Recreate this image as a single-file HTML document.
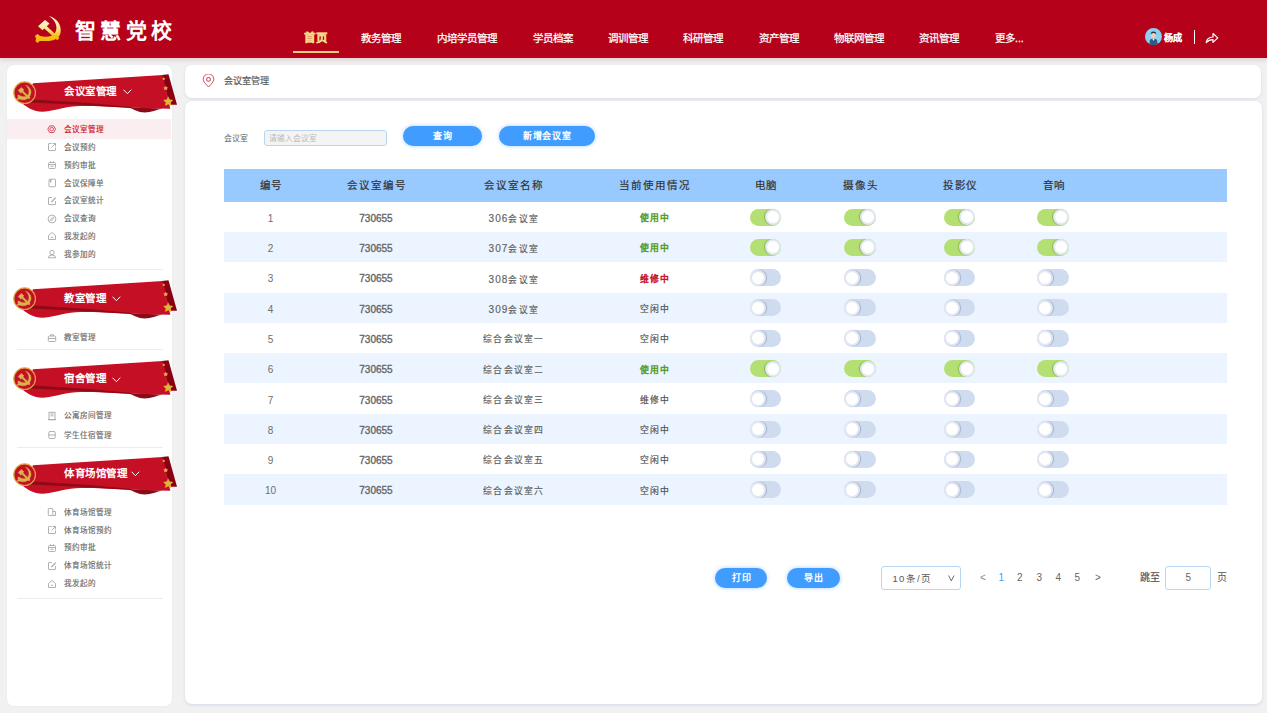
<!DOCTYPE html><html lang="zh-CN"><head><meta charset="utf-8"><style>
*{box-sizing:border-box;margin:0;padding:0}
html,body{width:1267px;height:713px;overflow:hidden;background:#f1f1f1;font-family:"Liberation Sans",sans-serif;color:#555}
.abs{position:absolute}
#hdr{position:absolute;left:0;top:0;width:1267px;height:58px;background:#b6011b;box-shadow:0 2px 5px rgba(150,20,40,.16)}
.nav{position:absolute;top:31.8px;font-size:10.5px;line-height:12px;color:#fff;white-space:nowrap;-webkit-text-stroke:.25px #fff}
#side{position:absolute;left:7px;top:65px;width:164.5px;height:641px;background:#fff;border-radius:7px;box-shadow:0 0 2px rgba(200,205,215,.35)}
#crumb{position:absolute;left:185px;top:65px;width:1076px;height:32.5px;background:#fff;border-radius:7px;box-shadow:0 1px 3px rgba(170,185,210,.35)}
#main{position:absolute;left:185px;top:101px;width:1076.5px;height:603px;background:#fff;border-radius:7px;box-shadow:0 1px 3px rgba(170,185,210,.45)}
.mi{position:absolute;left:64px;font-size:7.6px;line-height:10px;color:#6a6a6a;white-space:nowrap;-webkit-text-stroke:.15px #6a6a6a}
.ic{position:absolute;left:46.8px;width:10px;height:10px}
.dv{position:absolute;left:16.5px;width:146.5px;height:1px;background:#eaecf0}
.bt{position:absolute;font-size:10.5px;letter-spacing:.55px;line-height:12px;font-weight:bold;color:#fff;white-space:nowrap}
.th{position:absolute;top:180px;margin-left:1px;font-size:10.5px;line-height:11px;color:#333;-webkit-text-stroke:.2px #333;letter-spacing:1.95px;white-space:nowrap;transform:translateX(-50%)}
.row{position:absolute;left:224px;width:1003px}
.td{position:absolute;font-size:10px;line-height:11px;color:#555;white-space:nowrap;transform:translateX(-50%)}
.tg{position:absolute;width:31.5px;height:17px;border-radius:9px}
.tg.on{background:#b3df73}
.tg.off{background:#cfdbef}
.tg i{position:absolute;top:.5px;width:16px;height:16px;border-radius:50%;background:#fff;border:2.2px solid #e3e7f2}
.tg.on i{right:0;box-shadow:-1px 0 1px rgba(60,110,20,.35)}
.tg.off i{left:0;box-shadow:1px 0 1px rgba(80,100,140,.35)}
.btn{position:absolute;height:20px;border-radius:10px;background:#409cff;color:#fff;font-size:9px;font-weight:bold;line-height:21px;text-align:center;box-shadow:0 0 4px rgba(64,156,255,.45);white-space:nowrap}
.pg{position:absolute;top:572px;font-size:10px;line-height:12px;color:#666;white-space:nowrap}
</style></head><body>
<div id="hdr">
<svg class="abs" style="left:30px;top:12px" width="36" height="34" viewBox="0 0 36 34">
<defs><linearGradient id="gd" x1="0" y1="0" x2="0" y2="1"><stop offset="0" stop-color="#fffbe6"/><stop offset=".45" stop-color="#fbe48a"/><stop offset=".75" stop-color="#f8c21a"/><stop offset="1" stop-color="#f5b000"/></linearGradient></defs>
<path d="M19,4 C27,6 32,13 30.5,21 C29,27 23,29.5 15,29 L9.5,29 L8,31 L5.5,29.5 L6,26.5 L5,24 L7.5,22 L10,24 C16,25.5 22,25 25,21 C28,16 26.5,9 19,4Z" fill="url(#gd)"/>
<path d="M8,14.3 L15,8 L19.5,11.5 L16.8,14.2 L29.5,26 L27.2,28.3 L14.3,16.5 L12.5,18.2 Z" fill="url(#gd)"/>
</svg>
<div class="abs" style="left:75px;top:19px;font-size:21px;line-height:24px;font-weight:bold;color:#fff;letter-spacing:4.3px;white-space:nowrap">智慧党校</div>
<div class="nav" style="left:304px;font-size:11.5px;letter-spacing:.5px;font-weight:bold;color:#f7d98a;top:32.3px;-webkit-text-stroke:.3px #f7d98a">首页</div>
<div class="abs" style="left:293px;top:51px;width:46px;height:2px;background:#f3cf7c"></div>
<div class="nav" style="left:361px">教务管理</div>
<div class="nav" style="left:437px">内培学员管理</div>
<div class="nav" style="left:533px">学员档案</div>
<div class="nav" style="left:608px">调训管理</div>
<div class="nav" style="left:683px">科研管理</div>
<div class="nav" style="left:759px">资产管理</div>
<div class="nav" style="left:834px">物联网管理</div>
<div class="nav" style="left:919px">资讯管理</div>
<div class="nav" style="left:995px">更多...</div>
<svg class="abs" style="left:1145px;top:27.7px" width="17" height="17" viewBox="0 0 17 17">
<circle cx="8.5" cy="8.5" r="8.5" fill="#8ccfee"/>
<path d="M4.5 16 L4.8 12.5 Q5.2 11.2 6.8 10.8 L10.2 10.8 Q11.8 11.2 12.2 12.5 L12.5 16 A8.5 8.5 0 0 1 4.5 16Z" fill="#2e5a86"/>
<path d="M7.3 10.8 L8.5 13 L9.7 10.8Z" fill="#f2f2f2"/>
<ellipse cx="8.5" cy="7.6" rx="2.4" ry="3" fill="#f3cdb0"/>
<path d="M5.8 6.6 Q5.6 3.6 8.5 3.5 Q11.4 3.6 11.2 6.6 Q10.6 5 8.5 5.1 Q6.4 5 5.8 6.6Z" fill="#2b3240"/>
</svg>
<div class="abs" style="left:1163.5px;top:32.5px;font-size:9.2px;line-height:11px;font-weight:bold;color:#fff;-webkit-text-stroke:.1px #fff">杨成</div>
<div class="abs" style="left:1194px;top:30px;width:1px;height:14px;background:#fff"></div>
<svg class="abs" style="left:1204px;top:32px" width="15" height="12" viewBox="0 0 15 12">
<path d="M2.2 10.6 C2.6 7.2 5 5.2 9 5 L9 1.5 L13.8 5.9 L9 10.4 L9 7.7 C6 7.7 4 8.6 2.2 10.6Z" fill="none" stroke="#fff" stroke-width="1.2" stroke-linejoin="round"/>
</svg>
</div>
<div id="side"></div><div id="crumb"></div><div id="main"></div>
<svg class="abs" style="left:5px;top:68px" width="180" height="48" viewBox="0 0 180 48">
<path d="M156.8,7.1 L163.5,6.3 L172,36.8 L164.5,36.8 Z" fill="#8a0012"/>
<path d="M157.5,40.4 C152,41.5 146,44.3 139.7,44.4 C133,44.4 128,41 124,39.2 Z" fill="#8a0a16"/>
<path d="M28,15.3 L157.8,7 L165.3,40.7 C150,40.6 135,39.8 120,39.4 C100,39 85,37.6 71,38.3 C56,39.5 46,43.8 36.9,43.7 C29,43.5 23,40 18,36 Z" fill="#c50f25"/>
<path d="M24,31.6 C40,32.4 55,33.3 68,34 C85,35 105,36.6 127,39.2 L127,40.2 C105,38.4 85,37.4 68,36.6 C55,36 40,35.3 24,34.6 Z" fill="#8e0a17"/>
<path d="M158.7,9.3 l.5,1 1.1,.15 -.8,.75 .2,1.1 -1,-.5 -1,.5 .2,-1.1 -.8,-.75 1.1,-.15z" fill="#e2b33c"/>
<path d="M160.7,17.6 l.8,1.6 1.7,.25 -1.25,1.2 .3,1.7 -1.55,-.8 -1.55,.8 .3,-1.7 -1.25,-1.2 1.7,-.25z" fill="#e2b33c"/>
<path d="M163.2,28.4 l1.55,3.15 3.45,.5 -2.5,2.45 .6,3.45 -3.1,-1.63 -3.1,1.63 .6,-3.45 -2.5,-2.45 3.45,-.5z" fill="#e2b33c"/>
<circle cx="19.65" cy="24.7" r="10.8" fill="#c50f25" stroke="#d9a84a" stroke-width="1.2"/>
<g transform="translate(12.4,17)" fill="#dcb24e" stroke="#dcb24e" stroke-width=".4" stroke-linejoin="round">
<path d="M8.2,0 C11.8,1.5 13.8,4.5 13.6,7.5 C13.4,10.5 11.5,13.5 8,14.6 C5.5,15.2 3,14.6 1.6,14 L0.2,14.8 L-0.2,13.3 L0.8,12.5 L0.4,10 L2,10.2 L3.2,11 C5.5,12 8.5,12 10.2,10.5 C11.8,8.8 11.9,5.5 10.8,3.5 C10.2,2.2 9.3,1 8.2,0Z"/>
<path d="M0.8,5.6 L3.8,2.4 L6.6,4.8 L5.6,5.9 L12.8,12.8 L11.6,14 L4.4,7.2 L3.4,8.3 Z"/>
</g>
</svg>
<div class="bt" style="left:64px;top:85px">会议室管理</div>
<svg class="abs" style="left:122.8px;top:88.5px" width="9" height="6" viewBox="0 0 9 6"><path d="M.5 .7 L4.4 4.7 L8.3 .7" fill="none" stroke="#fff" stroke-width="1"/></svg>
<div class="abs" style="left:7px;top:119.0px;width:164px;height:19.5px;background:#fbeef0"></div>
<svg class="ic" style="top:124.5px" viewBox="0 0 10 10"><path d="M0.8,4.2 L2.75,0.9 L6.65,0.9 L8.6,4.2 L6.65,7.5 L2.75,7.5Z" fill="none" stroke="#d63a52" stroke-width=".9" stroke-linejoin="round"/><circle cx="4.7" cy="4.2" r="1.8" fill="none" stroke="#d63a52" stroke-width=".85"/></svg>
<div class="mi" style="top:125.10px;color:#c8102e;-webkit-text-stroke:.15px #c8102e;">会议室管理</div>
<svg class="ic" style="top:142.3px" viewBox="0 0 10 10"><path d="M4.5 1.5 H2 Q1.5 1.5 1.5 2 V8 Q1.5 8.5 2 8.5 H8 Q8.5 8.5 8.5 8 V5.5 M5.5 1.5 H8.5 V4.5 M8.5 1.5 L4.5 5.5" fill="none" stroke="#a8a8a8" stroke-width=".9"/></svg>
<div class="mi" style="top:142.90px;">会议预约</div>
<svg class="ic" style="top:160.1px" viewBox="0 0 10 10"><rect x="1.5" y="2.5" width="7" height="6" rx="1" fill="none" stroke="#a8a8a8" stroke-width=".9"/><path d="M1.5 4.5 H8.5 M3.5 1.2 V3 M6.5 1.2 V3 M3.5 6.3 H6.5" fill="none" stroke="#a8a8a8" stroke-width=".9"/></svg>
<div class="mi" style="top:160.70px;">预约审批</div>
<svg class="ic" style="top:177.9px" viewBox="0 0 10 10"><rect x="2" y="1.2" width="6.5" height="7.6" rx=".8" fill="none" stroke="#a8a8a8" stroke-width=".9"/><path d="M3.5 1.2 V4.5 M3.5 3 H5" fill="none" stroke="#a8a8a8" stroke-width=".9"/></svg>
<div class="mi" style="top:178.50px;">会议保障单</div>
<svg class="ic" style="top:195.7px" viewBox="0 0 10 10"><path d="M8.5 5 V8 Q8.5 8.6 8 8.6 H2 Q1.5 8.6 1.5 8 V2 Q1.5 1.5 2 1.5 H5 M8.3 1.6 L4.5 5.4 V6 H5.1 L8.9 2.2Z" fill="none" stroke="#a8a8a8" stroke-width=".9"/></svg>
<div class="mi" style="top:196.30px;">会议室统计</div>
<svg class="ic" style="top:213.5px" viewBox="0 0 10 10"><circle cx="5" cy="5" r="3.9" fill="none" stroke="#a8a8a8" stroke-width=".9"/><path d="M6.8 3.2 L5.6 5.6 L3.2 6.8 L4.4 4.4Z" fill="none" stroke="#a8a8a8" stroke-width=".8"/></svg>
<div class="mi" style="top:214.10px;">会议查询</div>
<svg class="ic" style="top:231.3px" viewBox="0 0 10 10"><path d="M1.5 4.5 L5 1.5 L8.5 4.5 V8.5 H1.5Z M3.8 6.3 H6.2" fill="none" stroke="#a8a8a8" stroke-width=".9"/></svg>
<div class="mi" style="top:231.90px;">我发起的</div>
<svg class="ic" style="top:249.10000000000002px" viewBox="0 0 10 10"><circle cx="5" cy="3.5" r="2.2" fill="none" stroke="#a8a8a8" stroke-width=".9"/><path d="M1.3 8.8 Q1.5 6 5 6 Q8.5 6 8.7 8.8Z" fill="none" stroke="#a8a8a8" stroke-width=".9"/></svg>
<div class="mi" style="top:249.70px;">我参加的</div>
<div class="dv" style="top:268.5px"></div>
<svg class="abs" style="left:5px;top:273.9px" width="180" height="48" viewBox="0 0 180 48">
<path d="M156.8,7.1 L163.5,6.3 L172,36.8 L164.5,36.8 Z" fill="#8a0012"/>
<path d="M157.5,40.4 C152,41.5 146,44.3 139.7,44.4 C133,44.4 128,41 124,39.2 Z" fill="#8a0a16"/>
<path d="M28,15.3 L157.8,7 L165.3,40.7 C150,40.6 135,39.8 120,39.4 C100,39 85,37.6 71,38.3 C56,39.5 46,43.8 36.9,43.7 C29,43.5 23,40 18,36 Z" fill="#c50f25"/>
<path d="M24,31.6 C40,32.4 55,33.3 68,34 C85,35 105,36.6 127,39.2 L127,40.2 C105,38.4 85,37.4 68,36.6 C55,36 40,35.3 24,34.6 Z" fill="#8e0a17"/>
<path d="M158.7,9.3 l.5,1 1.1,.15 -.8,.75 .2,1.1 -1,-.5 -1,.5 .2,-1.1 -.8,-.75 1.1,-.15z" fill="#e2b33c"/>
<path d="M160.7,17.6 l.8,1.6 1.7,.25 -1.25,1.2 .3,1.7 -1.55,-.8 -1.55,.8 .3,-1.7 -1.25,-1.2 1.7,-.25z" fill="#e2b33c"/>
<path d="M163.2,28.4 l1.55,3.15 3.45,.5 -2.5,2.45 .6,3.45 -3.1,-1.63 -3.1,1.63 .6,-3.45 -2.5,-2.45 3.45,-.5z" fill="#e2b33c"/>
<circle cx="19.65" cy="24.7" r="10.8" fill="#c50f25" stroke="#d9a84a" stroke-width="1.2"/>
<g transform="translate(12.4,17)" fill="#dcb24e" stroke="#dcb24e" stroke-width=".4" stroke-linejoin="round">
<path d="M8.2,0 C11.8,1.5 13.8,4.5 13.6,7.5 C13.4,10.5 11.5,13.5 8,14.6 C5.5,15.2 3,14.6 1.6,14 L0.2,14.8 L-0.2,13.3 L0.8,12.5 L0.4,10 L2,10.2 L3.2,11 C5.5,12 8.5,12 10.2,10.5 C11.8,8.8 11.9,5.5 10.8,3.5 C10.2,2.2 9.3,1 8.2,0Z"/>
<path d="M0.8,5.6 L3.8,2.4 L6.6,4.8 L5.6,5.9 L12.8,12.8 L11.6,14 L4.4,7.2 L3.4,8.3 Z"/>
</g>
</svg>
<div class="bt" style="left:64px;top:292.4px">教室管理</div>
<svg class="abs" style="left:112.3px;top:295.9px" width="9" height="6" viewBox="0 0 9 6"><path d="M.5 .7 L4.4 4.7 L8.3 .7" fill="none" stroke="#fff" stroke-width="1"/></svg>
<svg class="ic" style="top:332.5px" viewBox="0 0 10 10"><rect x="1.3" y="3" width="7.4" height="5.5" rx="1" fill="none" stroke="#a8a8a8" stroke-width=".9"/><path d="M3.5 3 V1.8 H6.5 V3 M1.3 5.5 H8.7 M5 4.8 V6" fill="none" stroke="#a8a8a8" stroke-width=".9"/></svg>
<div class="mi" style="top:333.10px;">教室管理</div>
<div class="dv" style="top:348.8px"></div>
<svg class="abs" style="left:5px;top:354.2px" width="180" height="48" viewBox="0 0 180 48">
<path d="M156.8,7.1 L163.5,6.3 L172,36.8 L164.5,36.8 Z" fill="#8a0012"/>
<path d="M157.5,40.4 C152,41.5 146,44.3 139.7,44.4 C133,44.4 128,41 124,39.2 Z" fill="#8a0a16"/>
<path d="M28,15.3 L157.8,7 L165.3,40.7 C150,40.6 135,39.8 120,39.4 C100,39 85,37.6 71,38.3 C56,39.5 46,43.8 36.9,43.7 C29,43.5 23,40 18,36 Z" fill="#c50f25"/>
<path d="M24,31.6 C40,32.4 55,33.3 68,34 C85,35 105,36.6 127,39.2 L127,40.2 C105,38.4 85,37.4 68,36.6 C55,36 40,35.3 24,34.6 Z" fill="#8e0a17"/>
<path d="M158.7,9.3 l.5,1 1.1,.15 -.8,.75 .2,1.1 -1,-.5 -1,.5 .2,-1.1 -.8,-.75 1.1,-.15z" fill="#e2b33c"/>
<path d="M160.7,17.6 l.8,1.6 1.7,.25 -1.25,1.2 .3,1.7 -1.55,-.8 -1.55,.8 .3,-1.7 -1.25,-1.2 1.7,-.25z" fill="#e2b33c"/>
<path d="M163.2,28.4 l1.55,3.15 3.45,.5 -2.5,2.45 .6,3.45 -3.1,-1.63 -3.1,1.63 .6,-3.45 -2.5,-2.45 3.45,-.5z" fill="#e2b33c"/>
<circle cx="19.65" cy="24.7" r="10.8" fill="#c50f25" stroke="#d9a84a" stroke-width="1.2"/>
<g transform="translate(12.4,17)" fill="#dcb24e" stroke="#dcb24e" stroke-width=".4" stroke-linejoin="round">
<path d="M8.2,0 C11.8,1.5 13.8,4.5 13.6,7.5 C13.4,10.5 11.5,13.5 8,14.6 C5.5,15.2 3,14.6 1.6,14 L0.2,14.8 L-0.2,13.3 L0.8,12.5 L0.4,10 L2,10.2 L3.2,11 C5.5,12 8.5,12 10.2,10.5 C11.8,8.8 11.9,5.5 10.8,3.5 C10.2,2.2 9.3,1 8.2,0Z"/>
<path d="M0.8,5.6 L3.8,2.4 L6.6,4.8 L5.6,5.9 L12.8,12.8 L11.6,14 L4.4,7.2 L3.4,8.3 Z"/>
</g>
</svg>
<div class="bt" style="left:64px;top:371.9px">宿舍管理</div>
<svg class="abs" style="left:112.3px;top:376.9px" width="9" height="6" viewBox="0 0 9 6"><path d="M.5 .7 L4.4 4.7 L8.3 .7" fill="none" stroke="#fff" stroke-width="1"/></svg>
<svg class="ic" style="top:410.5px" viewBox="0 0 10 10"><rect x="2" y="1.3" width="6" height="7.4" fill="none" stroke="#a8a8a8" stroke-width=".9"/><path d="M3.5 3 H6.5 M3.5 4.8 H6.5 M1 8.7 H9" fill="none" stroke="#a8a8a8" stroke-width=".9"/></svg>
<div class="mi" style="top:411.10px;">公寓房间管理</div>
<svg class="ic" style="top:430px" viewBox="0 0 10 10"><rect x="1.8" y="1.5" width="6.4" height="7" rx="1.2" fill="none" stroke="#a8a8a8" stroke-width=".9"/><path d="M1.8 5 H8.2" fill="none" stroke="#a8a8a8" stroke-width=".9"/></svg>
<div class="mi" style="top:430.60px;">学生住宿管理</div>
<div class="dv" style="top:447px"></div>
<svg class="abs" style="left:5px;top:449.5px" width="180" height="48" viewBox="0 0 180 48">
<path d="M156.8,7.1 L163.5,6.3 L172,36.8 L164.5,36.8 Z" fill="#8a0012"/>
<path d="M157.5,40.4 C152,41.5 146,44.3 139.7,44.4 C133,44.4 128,41 124,39.2 Z" fill="#8a0a16"/>
<path d="M28,15.3 L157.8,7 L165.3,40.7 C150,40.6 135,39.8 120,39.4 C100,39 85,37.6 71,38.3 C56,39.5 46,43.8 36.9,43.7 C29,43.5 23,40 18,36 Z" fill="#c50f25"/>
<path d="M24,31.6 C40,32.4 55,33.3 68,34 C85,35 105,36.6 127,39.2 L127,40.2 C105,38.4 85,37.4 68,36.6 C55,36 40,35.3 24,34.6 Z" fill="#8e0a17"/>
<path d="M158.7,9.3 l.5,1 1.1,.15 -.8,.75 .2,1.1 -1,-.5 -1,.5 .2,-1.1 -.8,-.75 1.1,-.15z" fill="#e2b33c"/>
<path d="M160.7,17.6 l.8,1.6 1.7,.25 -1.25,1.2 .3,1.7 -1.55,-.8 -1.55,.8 .3,-1.7 -1.25,-1.2 1.7,-.25z" fill="#e2b33c"/>
<path d="M163.2,28.4 l1.55,3.15 3.45,.5 -2.5,2.45 .6,3.45 -3.1,-1.63 -3.1,1.63 .6,-3.45 -2.5,-2.45 3.45,-.5z" fill="#e2b33c"/>
<circle cx="19.65" cy="24.7" r="10.8" fill="#c50f25" stroke="#d9a84a" stroke-width="1.2"/>
<g transform="translate(12.4,17)" fill="#dcb24e" stroke="#dcb24e" stroke-width=".4" stroke-linejoin="round">
<path d="M8.2,0 C11.8,1.5 13.8,4.5 13.6,7.5 C13.4,10.5 11.5,13.5 8,14.6 C5.5,15.2 3,14.6 1.6,14 L0.2,14.8 L-0.2,13.3 L0.8,12.5 L0.4,10 L2,10.2 L3.2,11 C5.5,12 8.5,12 10.2,10.5 C11.8,8.8 11.9,5.5 10.8,3.5 C10.2,2.2 9.3,1 8.2,0Z"/>
<path d="M0.8,5.6 L3.8,2.4 L6.6,4.8 L5.6,5.9 L12.8,12.8 L11.6,14 L4.4,7.2 L3.4,8.3 Z"/>
</g>
</svg>
<div class="bt" style="left:64px;top:467.2px">体育场馆管理</div>
<svg class="abs" style="left:131.4px;top:470.7px" width="9" height="6" viewBox="0 0 9 6"><path d="M.5 .7 L4.4 4.7 L8.3 .7" fill="none" stroke="#fff" stroke-width="1"/></svg>
<svg class="ic" style="top:507.0px" viewBox="0 0 10 10"><rect x="1.3" y="1.5" width="4.5" height="7" rx=".6" fill="none" stroke="#a8a8a8" stroke-width=".9"/><path d="M5.8 4.5 H8.5 V8.5 H5.8" fill="none" stroke="#a8a8a8" stroke-width=".9"/></svg>
<div class="mi" style="top:507.60px;">体育场馆管理</div>
<svg class="ic" style="top:524.9px" viewBox="0 0 10 10"><path d="M4.5 1.5 H2 Q1.5 1.5 1.5 2 V8 Q1.5 8.5 2 8.5 H8 Q8.5 8.5 8.5 8 V5.5 M5.5 1.5 H8.5 V4.5 M8.5 1.5 L4.5 5.5" fill="none" stroke="#a8a8a8" stroke-width=".9"/></svg>
<div class="mi" style="top:525.50px;">体育场馆预约</div>
<svg class="ic" style="top:542.8px" viewBox="0 0 10 10"><rect x="1.5" y="2.5" width="7" height="6" rx="1" fill="none" stroke="#a8a8a8" stroke-width=".9"/><path d="M1.5 4.5 H8.5 M3.5 1.2 V3 M6.5 1.2 V3 M3.5 6.3 H6.5" fill="none" stroke="#a8a8a8" stroke-width=".9"/></svg>
<div class="mi" style="top:543.40px;">预约审批</div>
<svg class="ic" style="top:560.7px" viewBox="0 0 10 10"><path d="M8.5 5 V8 Q8.5 8.6 8 8.6 H2 Q1.5 8.6 1.5 8 V2 Q1.5 1.5 2 1.5 H5 M8.3 1.6 L4.5 5.4 V6 H5.1 L8.9 2.2Z" fill="none" stroke="#a8a8a8" stroke-width=".9"/></svg>
<div class="mi" style="top:561.30px;">体育场馆统计</div>
<svg class="ic" style="top:578.6px" viewBox="0 0 10 10"><path d="M1.5 4.5 L5 1.5 L8.5 4.5 V8.5 H1.5Z M3.8 6.3 H6.2" fill="none" stroke="#a8a8a8" stroke-width=".9"/></svg>
<div class="mi" style="top:579.20px;">我发起的</div>
<div class="dv" style="top:598px"></div>
<svg class="abs" style="left:202px;top:74px" width="13" height="14" viewBox="0 0 13 14">
<path d="M6.5 13 C3 9.5 1.2 7.2 1.2 5.2 A5.3 5.3 0 0 1 11.8 5.2 C11.8 7.2 10 9.5 6.5 13Z" fill="none" stroke="#d9475c" stroke-width="1"/>
<circle cx="6.5" cy="5.4" r="1.9" fill="none" stroke="#d9475c" stroke-width="1.1"/></svg>
<div class="abs" style="left:224px;top:76px;font-size:9.1px;line-height:11px;color:#555;white-space:nowrap;-webkit-text-stroke:.15px #555">会议室管理</div>
<div class="abs" style="left:224px;top:134px;font-size:7.9px;line-height:10px;color:#666;white-space:nowrap">会议室</div>
<div class="abs" style="left:264px;top:130px;width:123px;height:16px;border:1px solid #b8d6f2;border-radius:3px;background:#f4f4f4"></div>
<div class="abs" style="left:269px;top:134px;font-size:7.8px;line-height:10px;color:#bbb;white-space:nowrap">请输入会议室</div>
<div class="btn" style="left:403px;top:126px;width:79px;letter-spacing:1.3px;text-indent:1.8px">查询</div>
<div class="btn" style="left:499px;top:126px;width:96px;letter-spacing:.7px;text-indent:.7px">新增会议室</div>
<div class="abs" style="left:224px;top:169px;width:1003px;height:32.7px;background:#99caff"></div>
<div class="th" style="left:270.5px">编号</div>
<div class="th" style="left:376.3px">会议室编号</div>
<div class="th" style="left:512.8px">会议室名称</div>
<div class="th" style="left:654.3px">当前使用情况</div>
<div class="th" style="left:765.5px">电脑</div>
<div class="th" style="left:860px">摄像头</div>
<div class="th" style="left:959.5px">投影仪</div>
<div class="th" style="left:1053.5px">音响</div>
<div class="row" style="top:201.70px;height:30.3px;background:#fff"></div>
<div class="td" style="left:270.5px;top:212.70px;color:#6e6e6e">1</div>
<div class="td" style="left:376px;top:212.70px;color:#666;-webkit-text-stroke:.35px #666">730655</div>
<div class="td" style="left:513.8px;top:213.00px;font-size:8.8px;letter-spacing:1.2px;color:#606060;-webkit-text-stroke:.15px #606060"><span style="font-size:10px;letter-spacing:1.1px">306</span>会议室</div>
<div class="td" style="left:655px;top:213.00px;font-size:8.8px;color:#55991c;letter-spacing:1.3px;-webkit-text-stroke:.45px #55991c;">使用中</div>
<div class="tg on" style="left:749.6px;top:208.50px"><i></i></div>
<div class="tg on" style="left:844.3px;top:208.50px"><i></i></div>
<div class="tg on" style="left:943.7px;top:208.50px"><i></i></div>
<div class="tg on" style="left:1037.4px;top:208.50px"><i></i></div>
<div class="row" style="top:232.00px;height:30.3px;background:#ecf5ff"></div>
<div class="td" style="left:270.5px;top:243.00px;color:#6e6e6e">2</div>
<div class="td" style="left:376px;top:243.00px;color:#666;-webkit-text-stroke:.35px #666">730655</div>
<div class="td" style="left:513.8px;top:243.30px;font-size:8.8px;letter-spacing:1.2px;color:#606060;-webkit-text-stroke:.15px #606060"><span style="font-size:10px;letter-spacing:1.1px">307</span>会议室</div>
<div class="td" style="left:655px;top:243.30px;font-size:8.8px;color:#55991c;letter-spacing:1.3px;-webkit-text-stroke:.45px #55991c;">使用中</div>
<div class="tg on" style="left:749.6px;top:238.80px"><i></i></div>
<div class="tg on" style="left:844.3px;top:238.80px"><i></i></div>
<div class="tg on" style="left:943.7px;top:238.80px"><i></i></div>
<div class="tg on" style="left:1037.4px;top:238.80px"><i></i></div>
<div class="row" style="top:262.30px;height:30.3px;background:#fff"></div>
<div class="td" style="left:270.5px;top:273.30px;color:#6e6e6e">3</div>
<div class="td" style="left:376px;top:273.30px;color:#666;-webkit-text-stroke:.35px #666">730655</div>
<div class="td" style="left:513.8px;top:273.60px;font-size:8.8px;letter-spacing:1.2px;color:#606060;-webkit-text-stroke:.15px #606060"><span style="font-size:10px;letter-spacing:1.1px">308</span>会议室</div>
<div class="td" style="left:655px;top:273.60px;font-size:8.8px;color:#c4102c;letter-spacing:1.3px;-webkit-text-stroke:.45px #c4102c;">维修中</div>
<div class="tg off" style="left:749.6px;top:269.10px"><i></i></div>
<div class="tg off" style="left:844.3px;top:269.10px"><i></i></div>
<div class="tg off" style="left:943.7px;top:269.10px"><i></i></div>
<div class="tg off" style="left:1037.4px;top:269.10px"><i></i></div>
<div class="row" style="top:292.60px;height:30.3px;background:#ecf5ff"></div>
<div class="td" style="left:270.5px;top:303.60px;color:#6e6e6e">4</div>
<div class="td" style="left:376px;top:303.60px;color:#666;-webkit-text-stroke:.35px #666">730655</div>
<div class="td" style="left:513.8px;top:303.90px;font-size:8.8px;letter-spacing:1.2px;color:#606060;-webkit-text-stroke:.15px #606060"><span style="font-size:10px;letter-spacing:1.1px">309</span>会议室</div>
<div class="td" style="left:655px;top:303.90px;font-size:8.8px;color:#555;letter-spacing:1.3px;-webkit-text-stroke:.2px #555;">空闲中</div>
<div class="tg off" style="left:749.6px;top:299.40px"><i></i></div>
<div class="tg off" style="left:844.3px;top:299.40px"><i></i></div>
<div class="tg off" style="left:943.7px;top:299.40px"><i></i></div>
<div class="tg off" style="left:1037.4px;top:299.40px"><i></i></div>
<div class="row" style="top:322.90px;height:30.3px;background:#fff"></div>
<div class="td" style="left:270.5px;top:333.90px;color:#6e6e6e">5</div>
<div class="td" style="left:376px;top:333.90px;color:#666;-webkit-text-stroke:.35px #666">730655</div>
<div class="td" style="left:513.8px;top:334.20px;font-size:8.8px;letter-spacing:1.2px;color:#606060;-webkit-text-stroke:.15px #606060">综合会议室一</div>
<div class="td" style="left:655px;top:334.20px;font-size:8.8px;color:#555;letter-spacing:1.3px;-webkit-text-stroke:.2px #555;">空闲中</div>
<div class="tg off" style="left:749.6px;top:329.70px"><i></i></div>
<div class="tg off" style="left:844.3px;top:329.70px"><i></i></div>
<div class="tg off" style="left:943.7px;top:329.70px"><i></i></div>
<div class="tg off" style="left:1037.4px;top:329.70px"><i></i></div>
<div class="row" style="top:353.20px;height:30.3px;background:#ecf5ff"></div>
<div class="td" style="left:270.5px;top:364.20px;color:#6e6e6e">6</div>
<div class="td" style="left:376px;top:364.20px;color:#666;-webkit-text-stroke:.35px #666">730655</div>
<div class="td" style="left:513.8px;top:364.50px;font-size:8.8px;letter-spacing:1.2px;color:#606060;-webkit-text-stroke:.15px #606060">综合会议室二</div>
<div class="td" style="left:655px;top:364.50px;font-size:8.8px;color:#55991c;letter-spacing:1.3px;-webkit-text-stroke:.45px #55991c;">使用中</div>
<div class="tg on" style="left:749.6px;top:360.00px"><i></i></div>
<div class="tg on" style="left:844.3px;top:360.00px"><i></i></div>
<div class="tg on" style="left:943.7px;top:360.00px"><i></i></div>
<div class="tg on" style="left:1037.4px;top:360.00px"><i></i></div>
<div class="row" style="top:383.50px;height:30.3px;background:#fff"></div>
<div class="td" style="left:270.5px;top:394.50px;color:#6e6e6e">7</div>
<div class="td" style="left:376px;top:394.50px;color:#666;-webkit-text-stroke:.35px #666">730655</div>
<div class="td" style="left:513.8px;top:394.80px;font-size:8.8px;letter-spacing:1.2px;color:#606060;-webkit-text-stroke:.15px #606060">综合会议室三</div>
<div class="td" style="left:655px;top:394.80px;font-size:8.8px;color:#555;letter-spacing:1.3px;-webkit-text-stroke:.2px #555;">维修中</div>
<div class="tg off" style="left:749.6px;top:390.30px"><i></i></div>
<div class="tg off" style="left:844.3px;top:390.30px"><i></i></div>
<div class="tg off" style="left:943.7px;top:390.30px"><i></i></div>
<div class="tg off" style="left:1037.4px;top:390.30px"><i></i></div>
<div class="row" style="top:413.80px;height:30.3px;background:#ecf5ff"></div>
<div class="td" style="left:270.5px;top:424.80px;color:#6e6e6e">8</div>
<div class="td" style="left:376px;top:424.80px;color:#666;-webkit-text-stroke:.35px #666">730655</div>
<div class="td" style="left:513.8px;top:425.10px;font-size:8.8px;letter-spacing:1.2px;color:#606060;-webkit-text-stroke:.15px #606060">综合会议室四</div>
<div class="td" style="left:655px;top:425.10px;font-size:8.8px;color:#555;letter-spacing:1.3px;-webkit-text-stroke:.2px #555;">空闲中</div>
<div class="tg off" style="left:749.6px;top:420.60px"><i></i></div>
<div class="tg off" style="left:844.3px;top:420.60px"><i></i></div>
<div class="tg off" style="left:943.7px;top:420.60px"><i></i></div>
<div class="tg off" style="left:1037.4px;top:420.60px"><i></i></div>
<div class="row" style="top:444.10px;height:30.3px;background:#fff"></div>
<div class="td" style="left:270.5px;top:455.10px;color:#6e6e6e">9</div>
<div class="td" style="left:376px;top:455.10px;color:#666;-webkit-text-stroke:.35px #666">730655</div>
<div class="td" style="left:513.8px;top:455.40px;font-size:8.8px;letter-spacing:1.2px;color:#606060;-webkit-text-stroke:.15px #606060">综合会议室五</div>
<div class="td" style="left:655px;top:455.40px;font-size:8.8px;color:#555;letter-spacing:1.3px;-webkit-text-stroke:.2px #555;">空闲中</div>
<div class="tg off" style="left:749.6px;top:450.90px"><i></i></div>
<div class="tg off" style="left:844.3px;top:450.90px"><i></i></div>
<div class="tg off" style="left:943.7px;top:450.90px"><i></i></div>
<div class="tg off" style="left:1037.4px;top:450.90px"><i></i></div>
<div class="row" style="top:474.40px;height:30.3px;background:#ecf5ff"></div>
<div class="td" style="left:270.5px;top:485.40px;color:#6e6e6e">10</div>
<div class="td" style="left:376px;top:485.40px;color:#666;-webkit-text-stroke:.35px #666">730655</div>
<div class="td" style="left:513.8px;top:485.70px;font-size:8.8px;letter-spacing:1.2px;color:#606060;-webkit-text-stroke:.15px #606060">综合会议室六</div>
<div class="td" style="left:655px;top:485.70px;font-size:8.8px;color:#555;letter-spacing:1.3px;-webkit-text-stroke:.2px #555;">空闲中</div>
<div class="tg off" style="left:749.6px;top:481.20px"><i></i></div>
<div class="tg off" style="left:844.3px;top:481.20px"><i></i></div>
<div class="tg off" style="left:943.7px;top:481.20px"><i></i></div>
<div class="tg off" style="left:1037.4px;top:481.20px"><i></i></div>
<div class="btn" style="left:715px;top:568.4px;width:52px;letter-spacing:1px;text-indent:1px">打印</div>
<div class="btn" style="left:787px;top:568.4px;width:53px;letter-spacing:1px;text-indent:1px">导出</div>
<div class="abs" style="left:881px;top:566px;width:80px;height:24px;border:1px solid #b8d6f2;border-radius:3px;background:#fff"></div>
<div class="pg" style="left:892.5px;top:572.8px;font-size:9.5px;letter-spacing:1.3px;color:#555">10条/页</div>
<svg class="abs" style="left:946.5px;top:574px" width="9" height="9" viewBox="0 0 9 9"><path d="M1.6 1.5 L4.3 6.9 L7 1.5" fill="none" stroke="#666" stroke-width=".95"/></svg>
<div class="pg" style="left:980px;color:#888">&lt;</div>
<div class="pg" style="left:998.5px;color:#409cff">1</div>
<div class="pg" style="left:1017px;color:#666">2</div>
<div class="pg" style="left:1036.6px;color:#666">3</div>
<div class="pg" style="left:1055.6px;color:#666">4</div>
<div class="pg" style="left:1074.6px;color:#666">5</div>
<div class="pg" style="left:1095px;color:#666">&gt;</div>
<div class="pg" style="left:1139.5px;color:#555;-webkit-text-stroke:.2px #555">跳至</div>
<div class="abs" style="left:1165px;top:566px;width:46px;height:24px;border:1px solid #b8d6f2;border-radius:3px;background:#fff"></div>
<div class="pg" style="left:1185.5px;color:#666">5</div>
<div class="pg" style="left:1217px;color:#555">页</div>
</body></html>
